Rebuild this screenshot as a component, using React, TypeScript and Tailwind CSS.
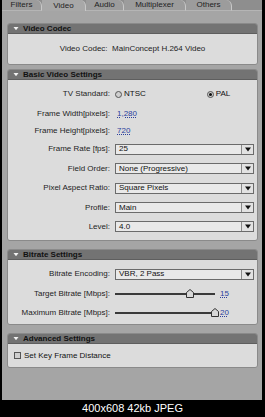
import type { ReactNode } from "react";

const font = { fontFamily: '"Liberation Sans", Arial, sans-serif' };

const tabs = [
  { name: "Filters", w: "w-[40px]" },
  { name: "Video", w: "w-[44px]", active: true },
  { name: "Audio", w: "w-[38px]" },
  { name: "Multiplexer", w: "w-[62px]" },
  { name: "Others", w: "w-[46px]" },
];

function Section(props: { title: string; children: ReactNode; className?: string }) {
  return (
    <div className={"rounded-[3px] border border-[#8a8a8a] overflow-hidden " + (props.className ?? "")}>
      <div className="h-[10px] bg-[#737373] flex items-center border-b border-[#5e5e5e]">
        <svg width="6" height="5" viewBox="0 0 6 5" className="ml-[5px] mr-[4px]">
          <path d="M0.5 1 L5.5 1 L3 4.2 Z" fill="#f2f2f2" />
        </svg>
        <span className="text-[8px] font-bold text-[#111] leading-none">{props.title}</span>
      </div>
      <div className="bg-[#dcdcdc]">{props.children}</div>
    </div>
  );
}

function Row(props: { label: string; h: string; children: ReactNode }) {
  return (
    <div className={"flex items-center " + props.h}>
      <div className="w-[103px] text-right pr-[1px] text-[8px] text-[#1c1c1c] leading-none whitespace-nowrap">{props.label}</div>
      <div className="ml-[4px] flex-1 flex items-center">{props.children}</div>
    </div>
  );
}

function Select(props: { value: string }) {
  return (
    <div className="w-[139px] h-[11px] bg-[#e9e9e9] border border-[#6b6b6b] flex items-center">
      <span className="flex-1 pl-[3px] text-[8px] leading-none text-[#111]">{props.value}</span>
      <div className="w-[12px] h-full border-l border-[#8a8a8a] flex items-center justify-center bg-[#e2e2e2]">
        <svg width="6" height="5" viewBox="0 0 6 5">
          <path d="M0 0.5 L6 0.5 L3 4.5 Z" fill="#111" />
        </svg>
      </div>
    </div>
  );
}

function Radio(props: { checked?: boolean }) {
  return (
    <span className="w-[7px] h-[7px] rounded-full border border-[#555] bg-[#cfcfcf] flex items-center justify-center">
      {props.checked ? <span className="w-[3px] h-[3px] rounded-full bg-[#111]" /> : null}
    </span>
  );
}

function Slider(props: { pos: number; value: string }) {
  return (
    <div className="flex items-center">
      <div className="relative w-[100px] h-[9px] flex items-center">
        <div className="w-full h-[2px] bg-[#3a3a3a]" />
        <svg width="8" height="9" viewBox="0 0 8 9" className="absolute top-0" style={{ left: props.pos }}>
          <path d="M4 0.5 L7.5 3.5 L7.5 8.5 L0.5 8.5 L0.5 3.5 Z" fill="#d8d8d8" stroke="#333" />
        </svg>
      </div>
      <span className="ml-[5px] text-[8px] leading-none text-[#2b3f9c] underline decoration-dotted">{props.value}</span>
    </div>
  );
}

export default function App() {
  return (
    <div className="w-[265px] h-[417px] bg-black flex flex-col" style={font}>
      <div className="flex-1 ml-[2px] mr-[3px] bg-[#a5a5a5] flex flex-col">
        <div className="h-[11px] flex bg-[#8e8e8e]">
          {tabs.map((t) => (
            <div
              key={t.name}
              className={
                "h-full flex items-center justify-center rounded-tr-[6px] border-r border-[#c8c8c8] text-[8px] leading-none text-[#1e1e1e] " +
                t.w +
                (t.active ? " bg-[#a8a8a8]" : " bg-[#9c9c9c] border-b border-b-[#b5b5b5]")
              }
            >
              {t.name}
            </div>
          ))}
          <div className="flex-1 border-b border-[#b5b5b5]" />
        </div>
        <div className="pl-[5px] pr-[4px] pt-[12px] flex flex-col">
          <Section title="Video Codec">
            <div className="h-[30px] flex items-center justify-center text-[8px] leading-none text-[#1c1c1c]">
              Video Codec:&nbsp; MainConcept H.264 Video
            </div>
          </Section>
          <Section title="Basic Video Settings" className="mt-[4px]">
            <div className="pt-[4px] pb-[4px]">
              <Row label="TV Standard:" h="h-[20px]">
                <Radio />
                <span className="ml-[2px] text-[8px] leading-none text-[#111]">NTSC</span>
                <span className="ml-[61px]">
                  <Radio checked />
                </span>
                <span className="ml-[2px] text-[8px] leading-none text-[#111]">PAL</span>
              </Row>
              <Row label="Frame Width[pixels]:" h="h-[19px]">
                <span className="ml-[2px] text-[8px] leading-none text-[#2b3f9c] underline decoration-dotted">1,280</span>
              </Row>
              <Row label="Frame Height[pixels]:" h="h-[16px]">
                <span className="ml-[2px] text-[8px] leading-none text-[#2b3f9c] underline decoration-dotted">720</span>
              </Row>
              <Row label="Frame Rate [fps]:" h="h-[20px]">
                <Select value="25" />
              </Row>
              <Row label="Field Order:" h="h-[19px]">
                <Select value="None (Progressive)" />
              </Row>
              <Row label="Pixel Aspect Ratio:" h="h-[20px]">
                <Select value="Square Pixels" />
              </Row>
              <Row label="Profile:" h="h-[19px]">
                <Select value="Main" />
              </Row>
              <Row label="Level:" h="h-[19px]">
                <Select value="4.0" />
              </Row>
            </div>
          </Section>
          <Section title="Bitrate Settings" className="mt-[8px]">
            <div className="pt-[4px] pb-[2px]">
              <Row label="Bitrate Encoding:" h="h-[20px]">
                <Select value="VBR, 2 Pass" />
              </Row>
              <Row label="Target Bitrate [Mbps]:" h="h-[19px]">
                <Slider pos={71} value="15" />
              </Row>
              <Row label="Maximum Bitrate [Mbps]:" h="h-[19px]">
                <Slider pos={96} value="20" />
              </Row>
            </div>
          </Section>
          <Section title="Advanced Settings" className="mt-[8px]">
            <div className="h-[23px] flex items-center pl-[6px]">
              <span className="w-[7px] h-[7px] border border-[#555] bg-[#cfcfcf]" />
              <span className="ml-[3px] text-[8px] leading-none text-[#111]">Set Key Frame Distance</span>
            </div>
          </Section>
        </div>
      </div>
      <div className="h-[17px] flex items-center justify-center text-white text-[11px] leading-none">
        400x608 42kb JPEG
      </div>
    </div>
  );
}
